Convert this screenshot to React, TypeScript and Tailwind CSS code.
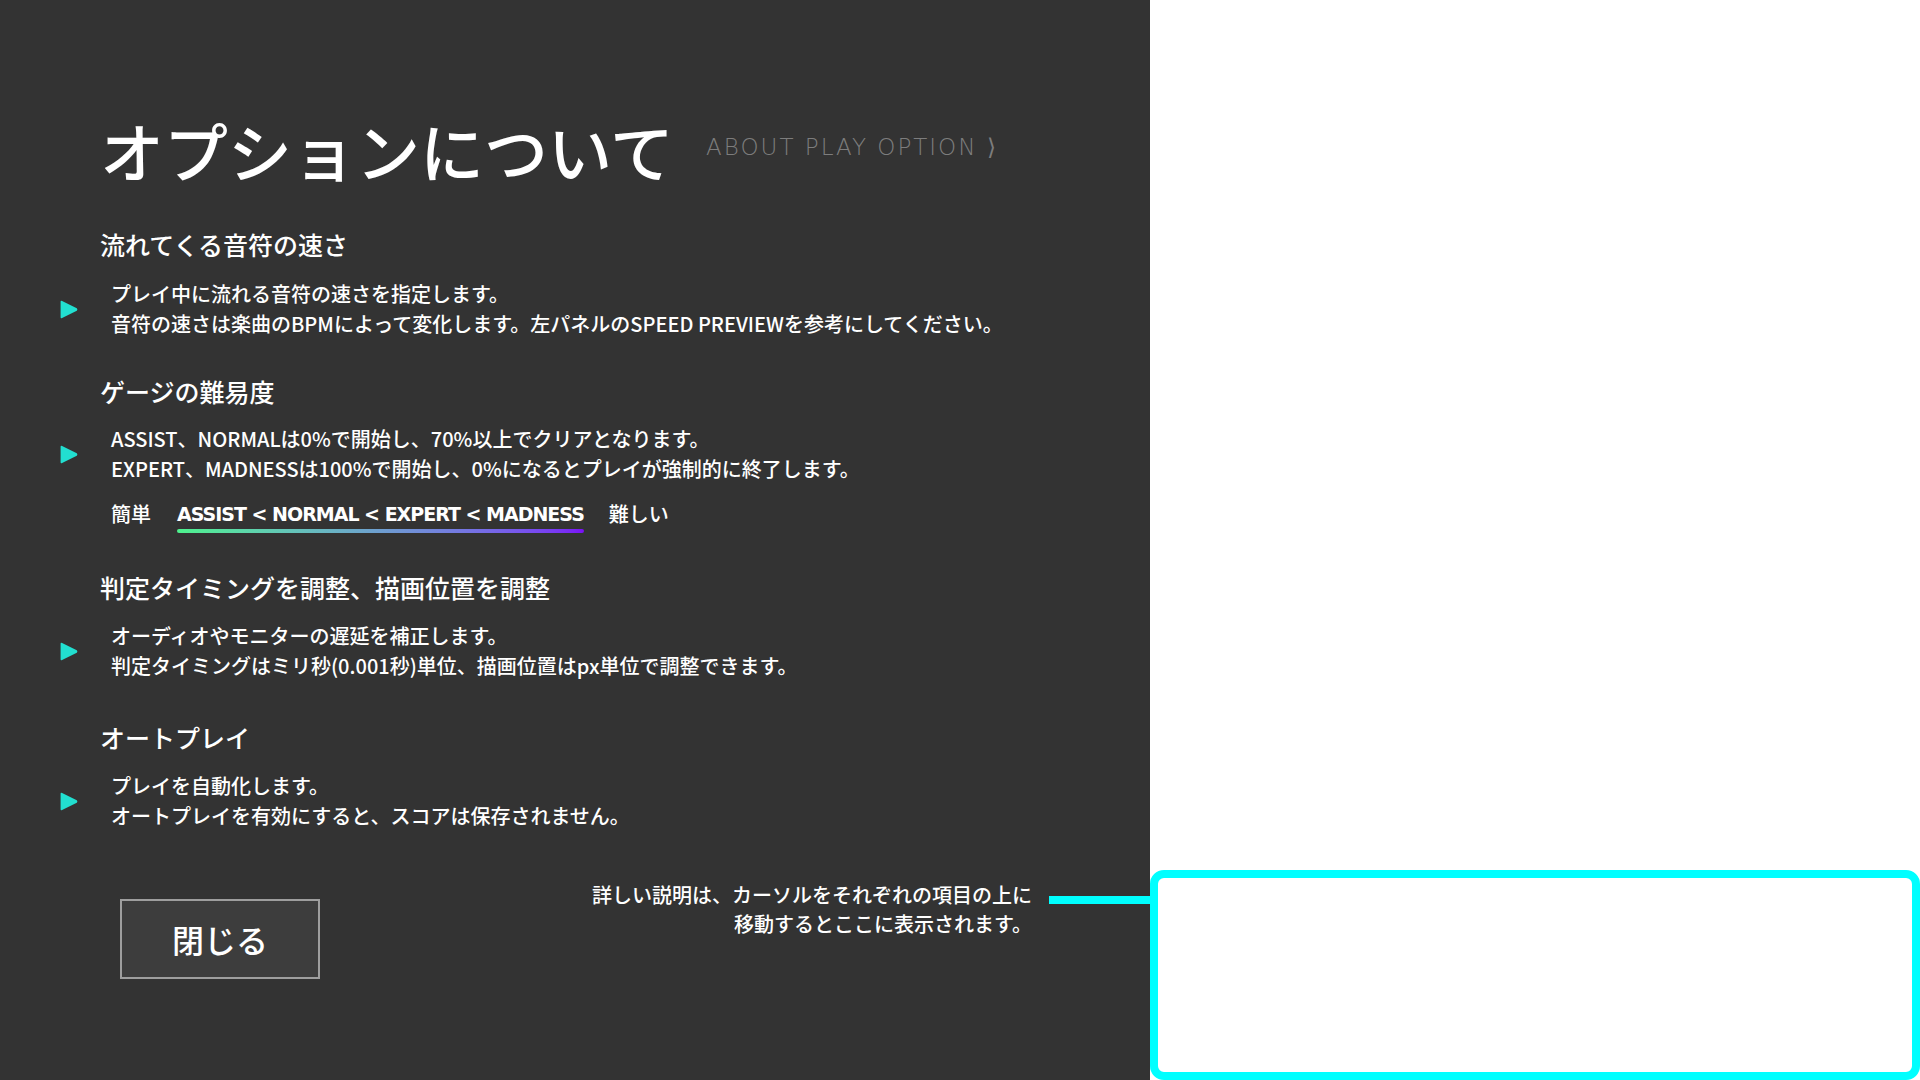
import React from "react"

const jp = "font-['Noto_Sans_CJK_JP',sans-serif]"

function Arrow() {
  return (
    <svg width="18" height="19" viewBox="0 0 18 19" className="shrink-0">
      <path d="M0.6 1.8 Q0.6 0.2 2.1 1 L16.8 8.3 Q18 9.5 16.8 10.7 L2.1 18 Q0.6 18.8 0.6 17.2 Z" fill="#22dfd0" />
    </svg>
  )
}

function Body({ lines }: { lines: string[] }) {
  return (
    <div className="flex items-center">
      <Arrow />
      <div className="ml-[33px] text-[20px] leading-[30px] font-medium text-white">
        {lines.map((l) => (
          <div key={l} className="whitespace-nowrap">{l}</div>
        ))}
      </div>
    </div>
  )
}

function Heading({ children, className = "" }: { children: React.ReactNode; className?: string }) {
  return <h3 className={`ml-[40px] text-[25px] leading-[30px] font-medium text-white ${className}`}>{children}</h3>
}

export default function App() {
  return (
    <div className={`flex h-screen w-full ${jp}`}>
      <div className="w-[1150px] shrink-0 bg-[#333333] pl-[60px] pt-[112px] flex flex-col">
        <div className="flex items-center ml-[40px]">
          <h1 className="text-[64px] leading-[74px] font-medium text-white whitespace-nowrap">オプションについて</h1>
          <span className="ml-[32px] mt-[-4px] text-[23px] tracking-[2px] font-extralight text-[#7d7d7d] font-['DejaVu_Sans',sans-serif] whitespace-nowrap">
            ABOUT PLAY OPTION ⟩
          </span>
        </div>

        <Heading className="mt-[43px]">流れてくる音符の速さ</Heading>
        <div className="mt-[20px]">
          <Body lines={["プレイ中に流れる音符の速さを指定します。", "音符の速さは楽曲のBPMによって変化します。左パネルのSPEED PREVIEWを参考にしてください。"]} />
        </div>

        <Heading className="mt-[37px]">ゲージの難易度</Heading>
        <div className="mt-[18px]">
          <Body lines={["ASSIST、NORMALは0%で開始し、70%以上でクリアとなります。", "EXPERT、MADNESSは100%で開始し、0%になるとプレイが強制的に終了します。"]} />
        </div>
        <div className="mt-[15px] ml-[51px] flex items-start text-white text-[20px] leading-[30px] font-medium">
          <span>簡単</span>
          <div className="ml-[26px] flex flex-col">
            <span className="font-['DejaVu_Sans',sans-serif] text-[19px] leading-[30px] font-semibold tracking-[-1px] whitespace-nowrap">
              ASSIST &lt; NORMAL &lt; EXPERT &lt; MADNESS
            </span>
            <div className="h-[4px] rounded-full bg-gradient-to-r from-[#4df28d] to-[#7a0cf7]" />
          </div>
          <span className="ml-[25px]">難しい</span>
        </div>

        <Heading className="mt-[39px]">判定タイミングを調整、描画位置を調整</Heading>
        <div className="mt-[19px]">
          <Body lines={["オーディオやモニターの遅延を補正します。", "判定タイミングはミリ秒(0.001秒)単位、描画位置はpx単位で調整できます。"]} />
        </div>

        <Heading className="mt-[41px]">オートプレイ</Heading>
        <div className="mt-[19px]">
          <Body lines={["プレイを自動化します。", "オートプレイを有効にすると、スコアは保存されません。"]} />
        </div>

        <div className="mt-[49px] flex items-start">
          <button className="ml-[60px] mt-[19px] w-[200px] h-[80px] border-2 border-[#9e9e9e] bg-[#3d3d3d] text-white text-[32px] font-medium">
            閉じる
          </button>
          <div className="ml-auto text-right text-white text-[20px] leading-[29px] font-medium">
            <div>詳しい説明は、カーソルをそれぞれの項目の上に</div>
            <div>移動するとここに表示されます。</div>
          </div>
          <div className="ml-[17px] mt-[16px] w-[101px] h-[8px] bg-[#00ffff]" />
        </div>
      </div>
      <div className="flex-1 bg-white flex flex-col justify-end">
        <div className="h-[210px] border-8 border-[#00ffff] rounded-[14px]" />
      </div>
    </div>
  )
}
